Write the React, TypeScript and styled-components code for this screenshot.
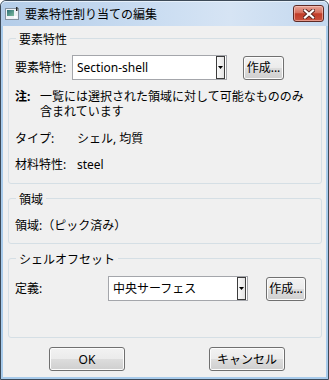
import React from "react";
import styled, { createGlobalStyle } from "styled-components";

const Global = createGlobalStyle`
  html, body { margin: 0; padding: 0; background: #ffffff; }
  body {
    font-family: "Noto Sans", "Noto Sans CJK JP", sans-serif;
    font-size: 12px;
    color: #000;
  }
  * { box-sizing: border-box; }
`;

const Window = styled.div`
  width: 329px;
  height: 380px;
  border: 1px solid #3d4a58;
  border-radius: 6px 6px 0 0;
  background: #a8cbeb;
  display: flex;
  flex-direction: column;
  overflow: hidden;
`;

const TitleBar = styled.div`
  height: 25px;
  flex: none;
  display: flex;
  align-items: center;
  padding: 0 4px;
  background: linear-gradient(to right, #b4cde9 0%, #c9dcf1 45%, #d6e4f4 70%, #c3d8ef 100%);
  border-radius: 5px 5px 0 0;
  box-shadow: inset 0 1px 0 #e6f0fa;
`;

const TitleText = styled.span`
  flex: 1;
  margin-left: 6px;
  font-family: "Noto Sans CJK JP", sans-serif;
  font-size: 12px;
  line-height: 15px;
  color: #000;
`;

const CloseButton = styled.div`
  width: 31px;
  height: 17px;
  border: 1px solid #5e2a25;
  border-radius: 3px;
  background: linear-gradient(#e6a497 0%, #d6705e 45%, #c13c28 52%, #c9523e 100%);
  box-shadow: inset 0 0 0 1px rgba(255, 210, 200, 0.55);
  display: flex;
  align-items: center;
  justify-content: center;
`;

const Client = styled.div`
  flex: 1;
  margin: 0 2px 2px;
  background: #f0f0f0;
  padding: 12px 4px 6px 5px;
  display: flex;
  flex-direction: column;
`;

const Group = styled.div<{ $pt: number; $pb: number }>`
  position: relative;
  border: 1px solid #d5dfe5;
  border-radius: 3px;
  padding: ${(p) => p.$pt}px 6px ${(p) => p.$pb}px;
  & + & {
    margin-top: 14px;
  }
`;

const Legend = styled.span`
  position: absolute;
  top: -8px;
  left: 7px;
  padding: 0 3px;
  background: #f0f0f0;
  line-height: 15px;
  font-family: "Noto Sans CJK JP", sans-serif;
`;

const ComboRow = styled.div`
  display: flex;
  align-items: center;
  height: 25px;
`;

const FieldLabel = styled.span<{ $w: number }>`
  width: ${(p) => p.$w}px;
  flex: none;
  line-height: 15px;
`;

const Combo = styled.div<{ $w: number }>`
  width: ${(p) => p.$w}px;
  height: 25px;
  flex: none;
  border: 1px solid #a4a6ab;
  background: #ffffff;
  display: flex;
  align-items: stretch;
  padding-right: 1px;
`;

const ComboText = styled.span`
  flex: 1;
  padding-left: 4px;
  display: flex;
  align-items: center;
  line-height: 15px;
`;

const ComboArrow = styled.span`
  width: 9px;
  border: 1px solid #3c3c3c;
  background: linear-gradient(to right, #fafafa, #e4e4e4);
  display: flex;
  align-items: center;
  justify-content: center;
`;

const PushButton = styled.button<{ $w: number; $ml?: number }>`
  width: ${(p) => p.$w}px;
  height: 24px;
  margin: 0 0 0 ${(p) => p.$ml ?? 0}px;
  padding: 0;
  flex: none;
  border: 1px solid #707070;
  border-radius: 3px;
  background: linear-gradient(#f2f2f2 0%, #ebebeb 50%, #dddddd 50%, #cfcfcf 100%);
  box-shadow: inset 0 0 0 1px #fcfcfc;
  font-family: "Noto Sans", "Noto Sans CJK JP", sans-serif;
  font-size: 12px;
  line-height: 15px;
  color: #000;
  text-align: center;
`;

const Note = styled.div`
  display: grid;
  grid-template-columns: 25px 1fr;
  line-height: 15px;
  margin-top: 9px;
`;

const NoteKey = styled.span`
  font-weight: bold;
`;

const InfoRow = styled.div<{ $mt: number }>`
  display: grid;
  grid-template-columns: 62px auto;
  line-height: 15px;
  margin-top: ${(p) => p.$mt}px;
`;

const Line = styled.div`
  line-height: 15px;
`;

const DialogButtons = styled.div`
  display: flex;
  gap: 84px;
  padding-left: 41px;
  margin-top: 9px;
`;

const AppIcon = () => (
  <svg width="14" height="13" viewBox="0 0 14 13">
    <defs>
      <linearGradient id="ig" x1="0" y1="0" x2="1" y2="1">
        <stop offset="0" stopColor="#2c6f78" />
        <stop offset="1" stopColor="#7dbb9c" />
      </linearGradient>
    </defs>
    <rect x="0.5" y="1.5" width="13" height="11" fill="#eef2f6" stroke="#8492a0" />
    <rect x="2" y="3" width="7" height="6" fill="url(#ig)" />
    <rect x="9" y="9" width="3" height="2" fill="#ffffff" />
    <rect x="11" y="0" width="1.5" height="4" fill="#2a2a2a" />
  </svg>
);

const CloseGlyph = () => (
  <svg width="12" height="10" viewBox="0 0 12 10">
    <path d="M2 1.5 L10 8.5 M10 1.5 L2 8.5" stroke="#5a2620" strokeWidth="4" strokeLinecap="square" />
    <path d="M2 1.5 L10 8.5 M10 1.5 L2 8.5" stroke="#ffffff" strokeWidth="2.2" strokeLinecap="square" />
  </svg>
);

const DownTriangle = () => (
  <svg width="5" height="3" viewBox="0 0 5 3">
    <polygon points="0,0 5,0 2.5,3" fill="#000" />
  </svg>
);

export default function App() {
  return (
    <>
      <Global />
      <Window>
        <TitleBar>
          <AppIcon />
          <TitleText>要素特性割り当ての編集</TitleText>
          <CloseButton>
            <CloseGlyph />
          </CloseButton>
        </TitleBar>
        <Client>
          <Group $pt={16} $pb={11}>
            <Legend>要素特性</Legend>
            <ComboRow>
              <FieldLabel $w={57}>要素特性:</FieldLabel>
              <Combo $w={155}>
                <ComboText>Section-shell</ComboText>
                <ComboArrow>
                  <DownTriangle />
                </ComboArrow>
              </Combo>
              <PushButton $w={41} $ml={16}>作成...</PushButton>
            </ComboRow>
            <Note>
              <NoteKey>注:</NoteKey>
              <span>
                一覧には選択された領域に対して可能なもののみ
                <br />
                含まれています
              </span>
            </Note>
            <InfoRow $mt={12}>
              <span>タイプ:</span>
              <span>シェル, 均質</span>
            </InfoRow>
            <InfoRow $mt={11}>
              <span>材料特性:</span>
              <span>steel</span>
            </InfoRow>
          </Group>
          <Group $pt={19} $pb={10}>
            <Legend>領域</Legend>
            <Line>領域:（ピック済み）</Line>
          </Group>
          <Group $pt={17} $pb={36}>
            <Legend>シェルオフセット</Legend>
            <ComboRow>
              <FieldLabel $w={93}>定義:</FieldLabel>
              <Combo $w={140}>
                <ComboText>中央サーフェス</ComboText>
                <ComboArrow>
                  <DownTriangle />
                </ComboArrow>
              </Combo>
              <PushButton $w={40} $ml={18}>作成...</PushButton>
            </ComboRow>
          </Group>
          <DialogButtons>
            <PushButton $w={76}>OK</PushButton>
            <PushButton $w={76}>キャンセル</PushButton>
          </DialogButtons>
        </Client>
      </Window>
    </>
  );
}
